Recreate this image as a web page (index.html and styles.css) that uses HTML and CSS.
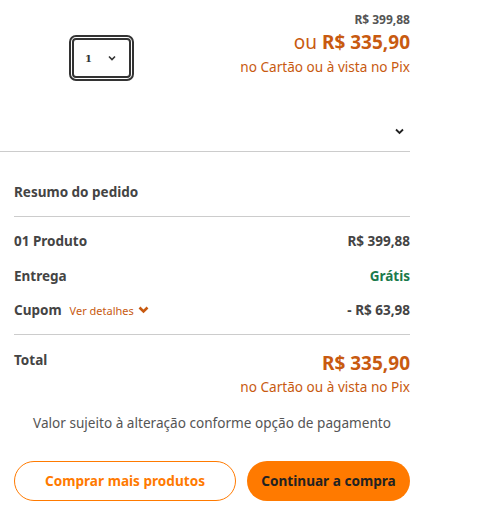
FILE: index.html
```html
<!DOCTYPE html>
<html>
<head>
    <title>Carrinho</title>
    <link rel="stylesheet" href="styles.css">
</head>
<body>
    <div class="cart">
        <div class="product">
            <div class="qty">
                <span class="qty-value">1</span>
                <svg class="qty-arrow" width="8" height="6" viewBox="0 0 8 6"><path d="M1 1.5 L4 4.5 L7 1.5" fill="none" stroke="#333" stroke-width="1.6"/></svg>
            </div>
            <div class="price">
                <div class="price-old">R$ 399,88</div>
                <div class="price-new">ou <strong>R$ 335,90</strong></div>
                <div class="price-note">no Cartão ou à vista no Pix</div>
            </div>
        </div>

        <div class="toggle">
            <svg width="9" height="7" viewBox="0 0 9 7"><path d="M1 1.5 L4.5 5 L8 1.5" fill="none" stroke="#222" stroke-width="1.8"/></svg>
        </div>

        <div class="summary">
            <h3 class="summary-title">Resumo do pedido</h3>
            <div class="summary-rows">
                <div class="row"><span>01 Produto</span><span>R$ 399,88</span></div>
                <div class="row"><span>Entrega</span><span class="free">Grátis</span></div>
                <div class="row">
                    <span class="coupon">Cupom
                        <a class="coupon-link">Ver detalhes
                            <svg width="11" height="8" viewBox="0 0 11 8"><path d="M1.5 1.5 L5.5 5.5 L9.5 1.5" fill="none" stroke="#c85a10" stroke-width="2.6"/></svg>
                        </a>
                    </span>
                    <span>- R$ 63,98</span>
                </div>
            </div>
            <div class="total">
                <span class="total-label">Total</span>
                <div class="total-price">
                    <div class="total-value">R$ 335,90</div>
                    <div class="price-note">no Cartão ou à vista no Pix</div>
                </div>
            </div>
            <p class="disclaimer">Valor sujeito à alteração conforme opção de pagamento</p>
            <div class="actions">
                <button class="btn btn-outline">Comprar mais produtos</button>
                <button class="btn btn-solid">Continuar a compra</button>
            </div>
        </div>
    </div>
</body>
</html>
```

FILE: styles.css
```css
body {
    margin: 0;
    font-family: "Noto Sans", sans-serif;
    color: #444;
    background: #fff;
}

.cart {
    width: 410px;
}

.product {
    display: flex;
    justify-content: space-between;
    align-items: flex-start;
    padding: 12px 0 0 69px;
}

.qty {
    margin-top: 23px;
    width: 65px;
    height: 46px;
    box-sizing: border-box;
    border: 5px double #333;
    border-radius: 7px;
    display: flex;
    align-items: center;
    gap: 16px;
    padding-left: 11px;
}

.qty-value {
    font-family: "DejaVu Serif", serif;
    font-size: 10px;
    font-weight: 700;
    color: #333;
}

.price {
    text-align: right;
}

.price-old {
    font-size: 12px;
    line-height: 16px;
    font-weight: 700;
    color: #555;
}

.price-new {
    font-size: 19px;
    line-height: 28px;
    color: #c85a10;
}

.price-new strong {
    font-weight: 700;
}

.price-note {
    font-size: 13.6px;
    line-height: 22px;
    color: #c85a10;
}

.toggle {
    display: flex;
    justify-content: flex-end;
    padding: 47px 6px 16px 0;
    border-bottom: 1px solid #ccc;
}

.summary {
    padding-left: 14px;
}

.summary-title {
    margin: 0;
    padding: 30px 0 14px;
    font-size: 13.5px;
    line-height: 20px;
    font-weight: 700;
    border-bottom: 1px solid #ccc;
}

.summary-rows {
    padding: 7px 0 6px;
    border-bottom: 1px solid #ccc;
}

.row {
    display: flex;
    justify-content: space-between;
    align-items: center;
    height: 34.5px;
    font-size: 13.5px;
    font-weight: 700;
}

.free {
    color: #1a7a4c;
}

.coupon {
    display: flex;
    align-items: center;
    gap: 8px;
}

.coupon-link {
    display: flex;
    align-items: center;
    gap: 4px;
    font-size: 11px;
    font-weight: 400;
    color: #c85a10;
}

.total {
    display: flex;
    justify-content: space-between;
    align-items: flex-start;
    padding-top: 15px;
}

.total-label {
    font-size: 13.5px;
    font-weight: 700;
    line-height: 20px;
}

.total-price {
    text-align: right;
}

.total-value {
    font-size: 19px;
    line-height: 26px;
    font-weight: 700;
    color: #c85a10;
}

.disclaimer {
    margin: 0;
    padding: 15px 0 0;
    text-align: center;
    font-size: 13.6px;
    line-height: 20px;
    color: #555;
}

.actions {
    display: flex;
    gap: 11px;
    margin-top: 28px;
}

.btn {
    height: 40px;
    border-radius: 20px;
    font-family: inherit;
    font-size: 13.6px;
    font-weight: 700;
    cursor: pointer;
}

.btn-outline {
    flex: 0 0 222px;
    background: #fff;
    border: 1px solid #ff7a00;
    color: #ff7a00;
}

.btn-solid {
    flex: 1;
    background: #ff7a00;
    border: none;
    color: #222;
}
```
